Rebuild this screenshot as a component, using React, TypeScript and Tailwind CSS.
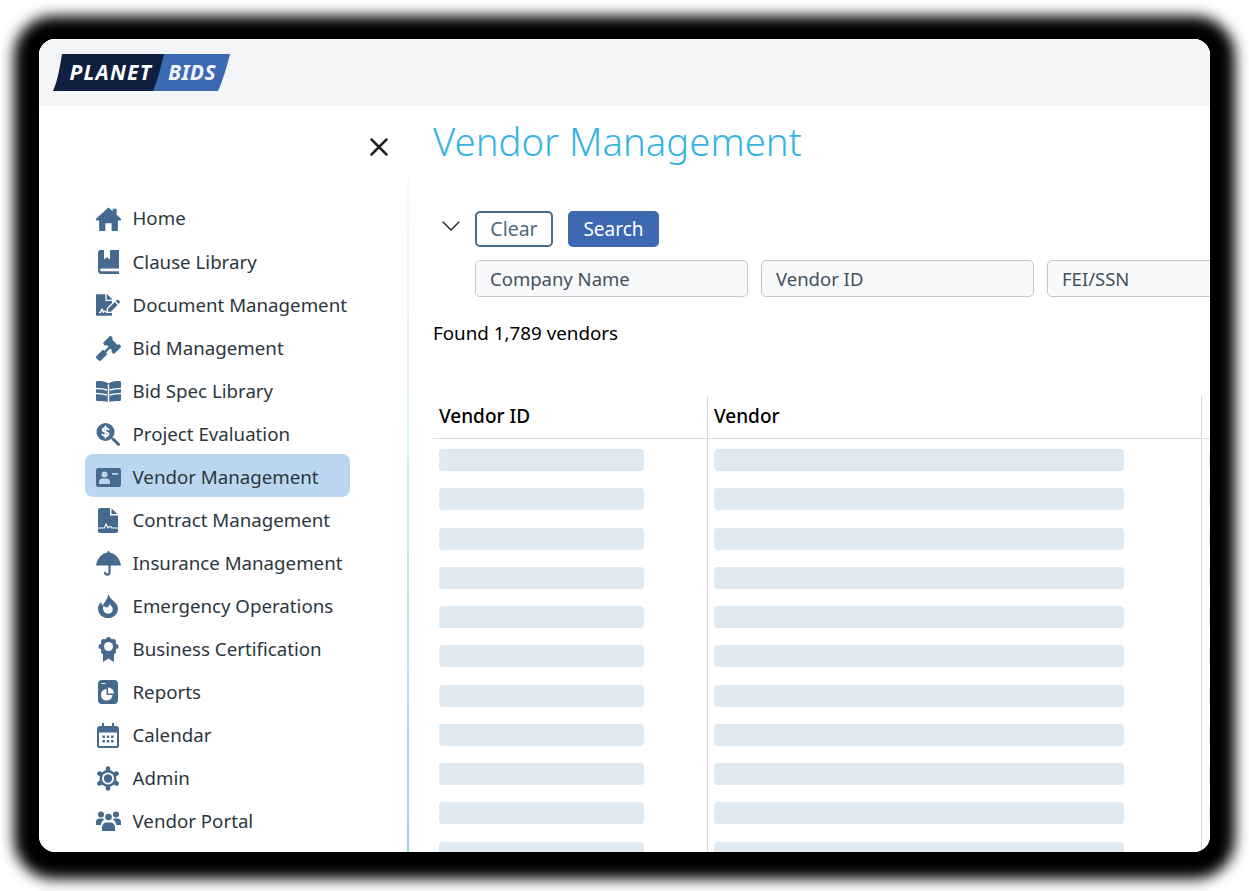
import { FaGavel, FaFileSignature } from "react-icons/fa";
import { ChevronDown, X } from "lucide-react";
import type { ReactNode } from "react";

const HomeIcon = () => (
  <svg viewBox="0 0 24 24" className="h-[26px] w-[25px]" fill="currentColor">
    <path d="M12 1 16 4.600V2.200h3.800V8L23.800 11.600c.7.700.3 1.900-.7 1.900H21V23.500H15V16H9V23.500H3V13.500H.9c-1 0-1.400-1.200-.7-1.900z" />
  </svg>
);

const ClauseIcon = () => (
  <svg viewBox="0 0 21 24" className="h-[24px] w-[21px]" fill="currentColor">
    <path d="M0 3C0 1.300 1.200 0 2.800 0H6v9.500L9 7.300l3 2.200V0h9v18.500H3.500a1.400 1.400 0 0 0 0 2.800H21V24H3.200C1.400 24 0 22.600 0 20.800z" />
  </svg>
);

const SpecIcon = () => (
  <svg viewBox="0 0 25 21" className="h-[21px] w-[25px]">
    <path fill="currentColor" d="M1.500 0C5.500 0 10 .6 12.500 2.500 15 .6 19.500 0 23.500 0 24.400 0 25 .7 25 1.500V18.500c0 .8-.6 1.500-1.500 1.500-4 0-8 .2-11 1-3-.8-7-1-11-1C.6 20 0 19.300 0 18.500V1.500C0 .7.600 0 1.500 0z" />
    <path fill="none" stroke="#fff" strokeWidth="1.500" d="M0 7.500c4 0 8 .5 11 1.500M25 7.500c-4 0-8 .5-11 1.500M0 12.500c4 0 8 .5 11 1.500M25 12.500c-4 0-8 .5-11 1.500M12.500 3.500V21" />
  </svg>
);

const EvaluationIcon = () => (
  <svg viewBox="0 0 25 23" className="h-[23px] w-[25px]">
    <circle cx="9.500" cy="9" r="9" fill="currentColor" />
    <path fill="none" stroke="#fff" strokeWidth="1.800" strokeLinecap="round" d="M12.500 6.500c-.6-1-1.700-1.300-3-1.300-1.700 0-2.800.8-2.800 1.900 0 2.600 5.800 1.300 5.800 3.900 0 1.200-1.300 2-3 2-1.400 0-2.500-.4-3.200-1.400M9.500 3.500v11" />
    <path fill="none" stroke="currentColor" strokeWidth="3" strokeLinecap="round" d="M17 16l5.500 5.300" />
  </svg>
);

const VendorIcon = () => (
  <svg viewBox="0 0 25 19" className="h-[19px] w-[25px]" fill="currentColor">
    <path fillRule="evenodd" d="M2.500 0h20A2.500 2.500 0 0 1 25 2.500v14a2.500 2.500 0 0 1-2.500 2.500h-20A2.500 2.500 0 0 1 0 16.500v-14A2.500 2.500 0 0 1 2.500 0zM8.500 3.500a3 3 0 1 0 0 6 3 3 0 0 0 0-6zM3 16h11v-2.200c0-2-1.500-3.300-3.200-3.300H6.200C4.500 10.500 3 11.800 3 13.800zM16 5v1.800h6V5z" />
  </svg>
);

const ContractIcon = () => (
  <svg viewBox="0 0 20 25" className="h-[25px] w-[20px]">
    <path fill="currentColor" d="M2 0h10v7.500h8V23a2 2 0 0 1-2 2H2a2 2 0 0 1-2-2V2a2 2 0 0 1 2-2z" />
    <path fill="currentColor" d="M13.500 .5l6 5.500h-6z" />
    <path fill="none" stroke="#fff" strokeWidth="1.100" d="M0 20h6.500l1.500-4 2.200 3.800 1.500-1.300h1l1 1.500H20" />
  </svg>
);

const UmbrellaIcon = () => (
  <svg viewBox="0 0 25 25" className="h-[25px] w-[25px]">
    <path fill="currentColor" d="M12.500 0c.6 0 1 .4 1 1v.6C19 2.300 23.600 7 25 14.500H0C1.400 7 6 2.300 11.500 1.600V1c0-.6.400-1 1-1z" />
    <path fill="none" stroke="currentColor" strokeWidth="2.200" strokeLinecap="round" d="M13.500 14v7.500c0 2.800-4 2.800-4.500.3" />
  </svg>
);

const FlameIcon = () => (
  <svg viewBox="0 0 20 24" className="h-[24px] w-[20px]">
    <path fill="currentColor" d="M10.500 0c.3 3 2.800 4.800 5.300 7.200C18.300 9.500 20 11.600 20 14.400 20 20 15.500 24 10 24S0 20 0 14.400C0 11.700 1.200 9.500 3.500 8c-.2 1.600 0 2.700.8 3.500C6.500 8.500 9.500 5 10.500 0z" />
    <path fill="#fff" d="M5.500 11.500c-1.500 3.800.6 8.300 4.700 8.300 3.500 0 5.400-3 4.200-6-.7-1.700-2-2.600-2.900-3.800-.3 2-1 3-2.200 3.300-1.400.3-2.800-.3-3.800-1.800z" />
  </svg>
);

const CertIcon = () => (
  <svg viewBox="0 0 21 25" className="h-[25px] w-[21px]">
    <path fill="currentColor" d="M5 14v11l5.500-3.500L16 25V14z" />
    <g fill="currentColor">
      <circle cx="10.500" cy="9.500" r="8" />
      <circle cx="10.500" cy="2.500" r="2.500" />
      <circle cx="15.500" cy="4.500" r="2.500" />
      <circle cx="18" cy="9.500" r="2.500" />
      <circle cx="15.500" cy="14.500" r="2.500" />
      <circle cx="10.500" cy="16.500" r="2.500" />
      <circle cx="5.500" cy="14.500" r="2.500" />
      <circle cx="3" cy="9.500" r="2.500" />
      <circle cx="5.500" cy="4.500" r="2.500" />
    </g>
    <circle cx="10.500" cy="9.500" r="4.500" fill="#fff" />
  </svg>
);

const ReportIcon = () => (
  <svg viewBox="0 0 20 24" className="h-[24px] w-[20px]">
    <rect width="20" height="24" rx="4" fill="currentColor" />
    <path fill="none" stroke="#fff" strokeWidth="1" d="M3.500 3.500h4" />
    <path fill="#fff" d="M8.500 9a5.800 5.800 0 1 0 6 6h-6z" />
    <path fill="#fff" d="M10 7.500v6h6a6 6 0 0 0-6-6z" />
  </svg>
);

const CalendarIcon = () => (
  <svg viewBox="0 0 22 25" className="h-[25px] w-[22px]" fill="currentColor">
    <path fillRule="evenodd" d="M5 0h2v3h8V0h2v3h2.500A2.500 2.500 0 0 1 22 5.500v17a2.500 2.500 0 0 1-2.500 2.500h-17A2.500 2.500 0 0 1 0 22.500v-17A2.500 2.500 0 0 1 2.500 3H5zM2 9.500v12.700c0 .5.300.8.800.8h16.400c.5 0 .8-.3.800-.8V9.500zM5.500 12.500h2.400v2.400H5.500zM9.800 12.500h2.400v2.400H9.800zM14.100 12.500h2.400v2.400h-2.400zM5.500 17h2.400v2.400H5.500zM9.800 17h2.400v2.400H9.800zM14.100 17h2.400v2.400h-2.400z" />
  </svg>
);

const AdminIcon = () => (
  <svg viewBox="0 0 24 25" className="h-[25px] w-[24px]">
    <g stroke="currentColor" strokeWidth="4.500" strokeLinecap="round">
      <path d="M12 2.500v20" />
      <path d="M3.300 7.500l17.400 10" />
      <path d="M3.300 17.500l17.400-10" />
    </g>
    <circle cx="12" cy="12.500" r="8.500" fill="currentColor" />
    <circle cx="12" cy="12.500" r="6" fill="#fff" />
    <circle cx="12" cy="12.500" r="4.200" fill="currentColor" />
  </svg>
);

const PortalIcon = () => (
  <svg viewBox="0 0 25 20" className="h-[20px] w-[25px]" fill="currentColor">
    <circle cx="5" cy="3.500" r="3" />
    <circle cx="20" cy="3.500" r="3" />
    <circle cx="12.500" cy="6" r="3.300" />
    <path d="M0 14v-3c0-2 1.500-3.500 3.500-3.500h3c.8 0 1.500.2 2 .6-1.500 1-3.500 3-3.800 5.900z" />
    <path d="M25 14v-3c0-2-1.500-3.500-3.500-3.500h-3c-.8 0-1.500.2-2 .6 1.500 1 3.500 3 3.800 5.900z" />
    <path d="M6 20v-3.500c0-3 2-5 4.500-5h4c2.500 0 4.500 2 4.500 5V20z" />
  </svg>
);

const navItems: { label: string; icon: ReactNode; active?: boolean }[] = [
  { label: "Home", icon: <HomeIcon /> },
  { label: "Clause Library", icon: <ClauseIcon /> },
  { label: "Document Management", icon: <FaFileSignature size={24} /> },
  { label: "Bid Management", icon: <FaGavel size={25} /> },
  { label: "Bid Spec Library", icon: <SpecIcon /> },
  { label: "Project Evaluation", icon: <EvaluationIcon /> },
  { label: "Vendor Management", icon: <VendorIcon />, active: true },
  { label: "Contract Management", icon: <ContractIcon /> },
  { label: "Insurance Management", icon: <UmbrellaIcon /> },
  { label: "Emergency Operations", icon: <FlameIcon /> },
  { label: "Business Certification", icon: <CertIcon /> },
  { label: "Reports", icon: <ReportIcon /> },
  { label: "Calendar", icon: <CalendarIcon /> },
  { label: "Admin", icon: <AdminIcon /> },
  { label: "Vendor Portal", icon: <PortalIcon /> },
];

const skeletonRows = Array.from({ length: 11 }, (_, i) => i);

const Logo = () => (
  <svg viewBox="0 0 177 37" className="ml-[14px] h-[37px] w-[177px]">
    <path d="M105 0H177C174 12 170 26 165 37H95Z" fill="#3c69b2" />
    <path d="M9 0H111C108 12 105 26 100 37H0C5 26 7 12 9 0Z" fill="#0e1f3f" />
    <text x="16.500" y="25.500" fill="#fff" fontSize="21" fontWeight="700" fontStyle="italic" letterSpacing="1.2">PLANET</text>
    <text x="115" y="25.500" fill="#f0f4fb" fontSize="21" fontWeight="700" fontStyle="italic" letterSpacing="0.4">BIDS</text>
  </svg>
);

const Column = ({ title, className, barClass }: { title: string; className: string; barClass: string }) => (
  <div className={className}>
    <div className="flex h-[43px] items-center border-b-[1.5px] border-[#d9dbdd] pb-[2px] text-[19px] font-medium leading-none text-black">
      <span className="pl-[6px] whitespace-nowrap">{title}</span>
    </div>
    <div className="flex flex-col gap-[17.25px] pt-[10px] pl-[6px]">
      {skeletonRows.map((row) => (
        <div key={row} className={`h-[22px] shrink-0 rounded-[4px] bg-[#dfe9f1] ${barClass}`} />
      ))}
    </div>
  </div>
);

export default function App() {
  return (
    <div className="h-[891px] overflow-hidden bg-white p-[39px] font-['Noto_Sans',sans-serif]">
      <div className="h-[813px] w-[1171px] rounded-[16px] shadow-[0_2px_14px_25px_#000]">
        <div className="flex h-full flex-col overflow-hidden rounded-[16px] bg-white">
          <header className="flex h-[67px] shrink-0 items-center bg-[#f4f5f7]">
            <Logo />
          </header>

          <div className="flex min-h-0 flex-1">
            <aside className="flex w-[368px] shrink-0 flex-col">
              <div className="flex justify-end pt-[26px] pr-[13px] text-[#222]">
                <X size={30} strokeWidth={2} />
              </div>
              <nav className="mt-[33px] flex w-[311px] flex-col pl-[46px]">
                {navItems.map((item, i) => (
                  <a
                    key={item.label}
                    className={`flex items-center gap-[11.500px] rounded-[8px] pt-[3px] pl-[10px] text-[18.700px] whitespace-nowrap text-[#2b3640] ${i === 0 ? "h-[44px]" : "h-[43px]"} ${item.active ? "bg-[#bad6f0]" : ""}`}
                  >
                    <span className="flex w-[26px] shrink-0 items-center justify-center text-[#456a8d]">{item.icon}</span>
                    {item.label}
                  </a>
                ))}
              </nav>
            </aside>
            <div className="w-[1.500px] shrink-0 bg-linear-to-b from-white via-[#c8e8ef] via-60% to-[#9ad5e2]" />

            <main className="flex min-w-0 flex-1 flex-col pt-[11px] pl-[24.500px]">
              <h1 className="text-[38.300px] leading-[48px] font-light whitespace-nowrap text-[#35b3e3]">Vendor Management</h1>

              <div className="mt-[46px] flex items-start pl-[2px]">
                <ChevronDown size={32} strokeWidth={1} className="-mt-[1px] shrink-0 text-[#222]" />
                <div className="ml-[8px] flex flex-col gap-[13px]">
                  <div className="flex gap-[15px]">
                    <button className="h-[36px] w-[78px] rounded-[5px] border-[2.500px] border-[#4a6a85] text-[19.500px] text-[#4d6a80]">Clear</button>
                    <button className="h-[36px] w-[91px] rounded-[5px] bg-[#3c69b2] text-[19px] text-white">Search</button>
                  </div>
                  <div className="flex gap-[13px]">
                    {["Company Name", "Vendor ID", "FEI/SSN"].map((field) => (
                      <div key={field} className="flex h-[37px] w-[273px] shrink-0 items-center rounded-[5px] border-[1.500px] border-[#c4c7ca] bg-[#f8f9fb] pl-[14px] text-[18.500px] text-[#43505e]">
                        {field}
                      </div>
                    ))}
                  </div>
                </div>
              </div>

              <p className="mt-[22px] text-[18.800px] leading-[28px] text-black">Found 1,789 vendors</p>

              <div className="mt-[49px] flex min-h-0 flex-1">
                <Column title="Vendor ID" className="w-[275px] shrink-0 border-r-[1.500px] border-[#d4d6d8]" barClass="w-[205px]" />
                <Column title="Vendor" className="w-[494px] shrink-0 border-r-[1.500px] border-[#d4d6d8]" barClass="w-[410px]" />
                <Column title="Email" className="min-w-0 flex-1 pl-[1px]" barClass="w-[200px]" />
              </div>
            </main>
          </div>
        </div>
      </div>
    </div>
  );
}
